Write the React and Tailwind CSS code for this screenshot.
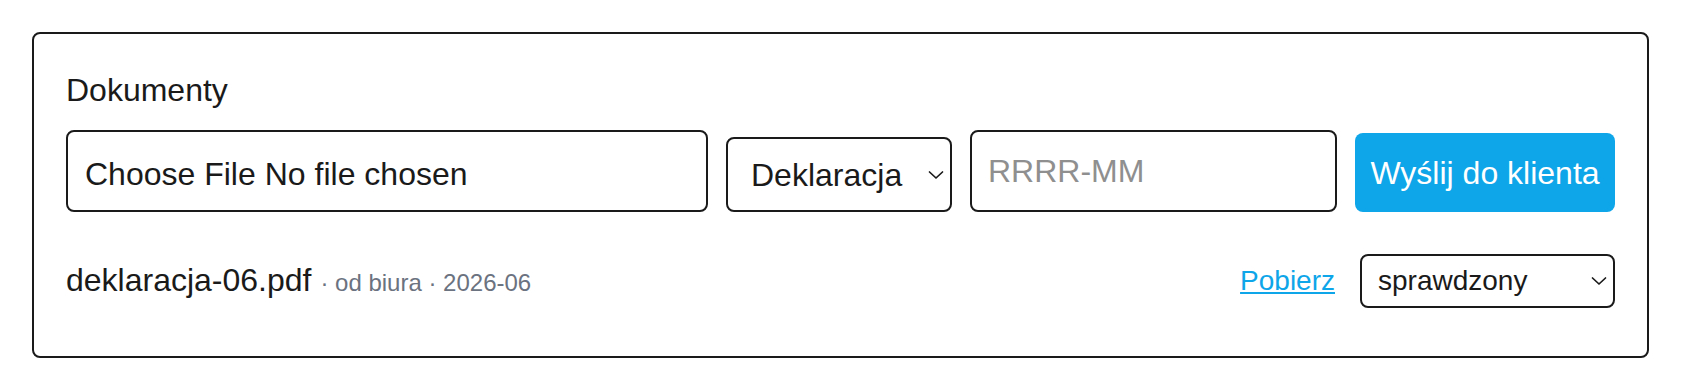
import React from "react";

function Chevron() {
  return (
    <svg
      width="16"
      height="9"
      viewBox="0 0 16 9"
      fill="none"
      stroke="#1a1a1a"
      strokeWidth="1.7"
      strokeLinecap="round"
      strokeLinejoin="round"
      className="pointer-events-none absolute right-[8px] top-1/2 -translate-y-1/2"
    >
      <polyline points="1.5,1.5 8,7.5 14.5,1.5" />
    </svg>
  );
}

export default function App() {
  return (
    <div
      className="w-[1681px] bg-white px-[32px] pt-[32px] text-[#1a1a1a]"
      style={{ fontFamily: '"Liberation Sans", Arial, sans-serif' }}
    >
      <div className="rounded-[8px] border-2 border-[#1a1a1a] p-[32px]">
        <h2 className="text-[32px] font-normal leading-[48px]">Dokumenty</h2>

        <div className="mt-[16px] flex items-end gap-[18px]">
          <input
            type="file"
            className="h-[82px] min-w-0 flex-1 rounded-[8px] border-2 border-[#1a1a1a] px-[17px] pt-[19px] pb-[13px] text-[32px] leading-[46px] file:mr-[9px]"
          />
          <div className="relative w-[226px] shrink-0">
            <select
              defaultValue="Deklaracja"
              className="h-[75px] w-full appearance-none rounded-[8px] border-2 border-[#1a1a1a] bg-white pl-[23px] pr-[30px] text-[32px]"
            >
              <option>Deklaracja</option>
              <option>Faktura</option>
              <option>Umowa</option>
            </select>
            <Chevron />
          </div>
          <input
            type="text"
            placeholder="RRRR-MM"
            className="h-[82px] w-[367px] shrink-0 rounded-[8px] border-2 border-[#1a1a1a] px-[16px] text-[32px] placeholder:text-[#8f8f8f]"
          />
          <button className="h-[79px] w-[260px] shrink-0 rounded-[8px] bg-[#0ea5e9] text-center text-[32px] leading-[48px] text-white">
            Wyślij do klienta
          </button>
        </div>

        <div className="mt-[26px] flex items-center justify-between py-[16px]">
          <div className="text-[32px] leading-[48px]">
            deklaracja-06.pdf{" "}
            <span className="text-[24px] text-[#6b7280]">· od biura · 2026-06</span>
          </div>
          <div className="flex items-center gap-[25px]">
            <a href="#" className="text-[28px] leading-[40px] text-[#0ea5e9] underline">
              Pobierz
            </a>
            <div className="relative w-[255px]">
              <select
                defaultValue="sprawdzony"
                className="h-[54px] w-full appearance-none rounded-[8px] border-2 border-[#1a1a1a] bg-white pl-[16px] pr-[30px] text-[28px]"
              >
                <option>nowy</option>
                <option>sprawdzony</option>
                <option>odrzucony</option>
              </select>
              <Chevron />
            </div>
          </div>
        </div>
      </div>
    </div>
  );
}
